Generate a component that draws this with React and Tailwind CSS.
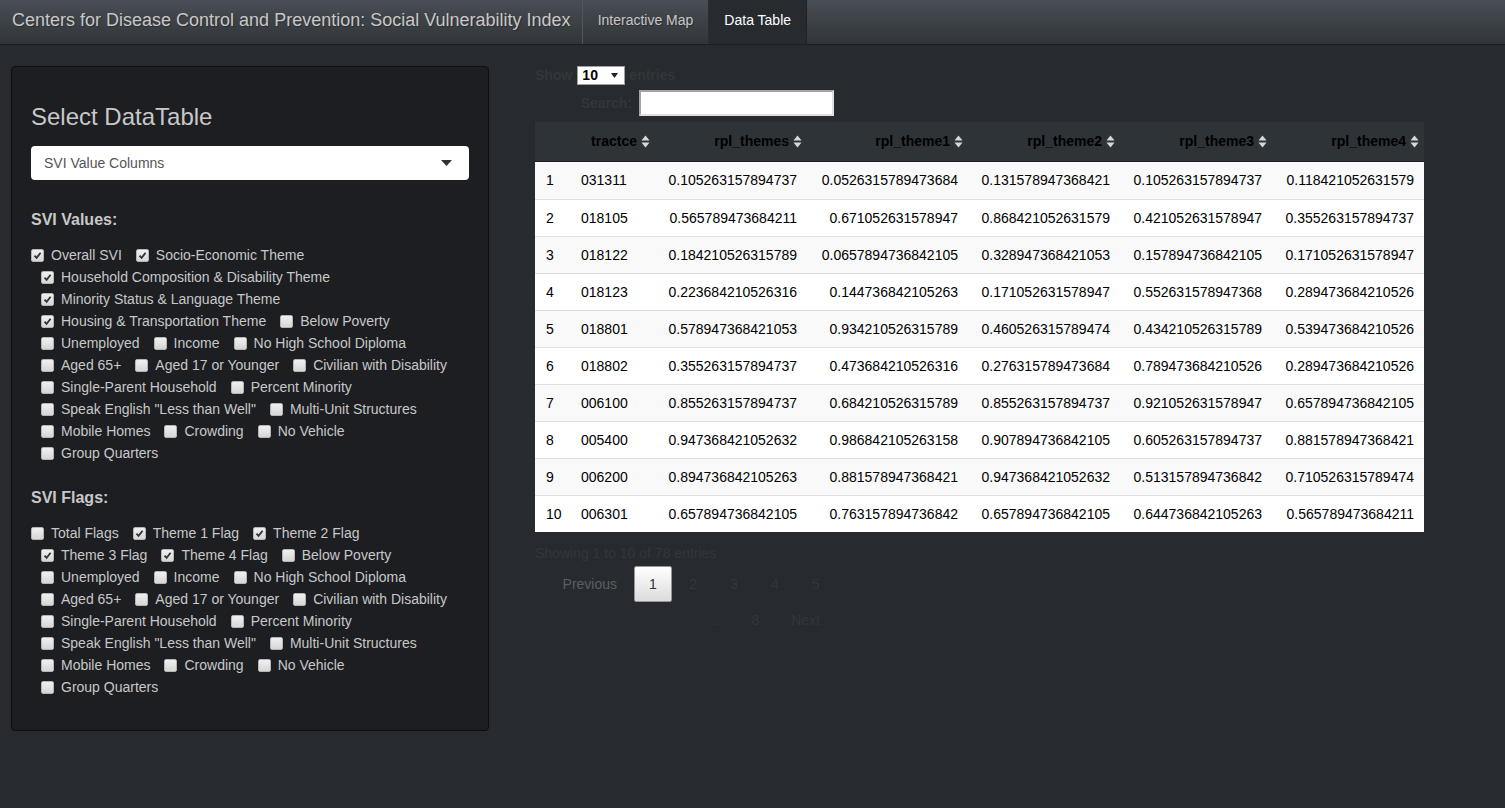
import React from "react";

const SVI_VALUES = [
  ["Overall SVI", true],
  ["Socio-Economic Theme", true],
  ["Household Composition & Disability Theme", true],
  ["Minority Status & Language Theme", true],
  ["Housing & Transportation Theme", true],
  ["Below Poverty", false],
  ["Unemployed", false],
  ["Income", false],
  ["No High School Diploma", false],
  ["Aged 65+", false],
  ["Aged 17 or Younger", false],
  ["Civilian with Disability", false],
  ["Single-Parent Household", false],
  ["Percent Minority", false],
  ['Speak English "Less than Well"', false],
  ["Multi-Unit Structures", false],
  ["Mobile Homes", false],
  ["Crowding", false],
  ["No Vehicle", false],
  ["Group Quarters", false],
];

const SVI_FLAGS = [
  ["Total Flags", false],
  ["Theme 1 Flag", true],
  ["Theme 2 Flag", true],
  ["Theme 3 Flag", true],
  ["Theme 4 Flag", true],
  ...SVI_VALUES.slice(5),
];

const ROWS = [
  ["031311", "0.105263157894737", "0.0526315789473684", "0.131578947368421", "0.105263157894737", "0.118421052631579"],
  ["018105", "0.565789473684211", "0.671052631578947", "0.868421052631579", "0.421052631578947", "0.355263157894737"],
  ["018122", "0.184210526315789", "0.0657894736842105", "0.328947368421053", "0.157894736842105", "0.171052631578947"],
  ["018123", "0.223684210526316", "0.144736842105263", "0.171052631578947", "0.552631578947368", "0.289473684210526"],
  ["018801", "0.578947368421053", "0.934210526315789", "0.460526315789474", "0.434210526315789", "0.539473684210526"],
  ["018802", "0.355263157894737", "0.473684210526316", "0.276315789473684", "0.789473684210526", "0.289473684210526"],
  ["006100", "0.855263157894737", "0.684210526315789", "0.855263157894737", "0.921052631578947", "0.657894736842105"],
  ["005400", "0.947368421052632", "0.986842105263158", "0.907894736842105", "0.605263157894737", "0.881578947368421"],
  ["006200", "0.894736842105263", "0.881578947368421", "0.947368421052632", "0.513157894736842", "0.710526315789474"],
  ["006301", "0.657894736842105", "0.763157894736842", "0.657894736842105", "0.644736842105263", "0.565789473684211"],
];

const COLUMNS = ["rpl_themes", "rpl_theme1", "rpl_theme2", "rpl_theme3", "rpl_theme4"];

// small grey checkbox like the default browser one
const Box = ({ checked }) => (
  <span className="flex h-[13px] w-[13px] shrink-0 items-center justify-center rounded-[2px] border border-[#b5b5b5] bg-[linear-gradient(#f0f0f0,#d6d6d6)]">
    {checked && (
      <svg width="9" height="9" viewBox="0 0 9 9">
        <path d="M1.5 4.6 L3.6 6.8 L7.6 1.8" fill="none" stroke="#333" strokeWidth="1.8" />
      </svg>
    )}
  </span>
);

const CheckGroup = ({ items }) => (
  <div className="flex flex-wrap gap-x-[4px]">
    {items.map(([label, checked], i) => (
      <label
        key={label}
        className={`flex h-[22px] items-center whitespace-nowrap ${i === 0 ? "" : "ml-[10px]"}`}
      >
        <Box checked={checked} />
        <span className="ml-[7px] text-[14px] text-[#c8c8c8]">{label}</span>
      </label>
    ))}
  </div>
);

const SortIcon = () => (
  <svg width="9" height="15" viewBox="0 0 9 15" className="shrink-0">
    <path d="M0.5 6.5 L4.5 1.5 L8.5 6.5 Z" fill="#d8d8d8" />
    <path d="M0.5 8.5 L4.5 13.5 L8.5 8.5 Z" fill="#d8d8d8" />
  </svg>
);

const PageButton = ({ children, className = "px-[14px]" }) => (
  <span className={`ml-[2px] inline-block h-[36px] border border-transparent leading-[34px] ${className}`}>
    {children}
  </span>
);

export default function App() {
  return (
    <div className="min-h-screen bg-[#272b30] font-['Liberation_Sans',Arial,sans-serif] text-[14px] text-[#c8c8c8]">
      {/* Navbar */}
      <div className="flex h-[45px] border-b border-[#1c1e22] bg-[linear-gradient(#484e55,#3a3f44_60%,#313539)]">
        <div className="flex items-center pb-[4px] pl-[12px] pr-[11px] text-[18px] text-[#c8c8c8] [text-shadow:1px_1px_1px_rgba(0,0,0,0.3)]">
          Centers for Disease Control and Prevention: Social Vulnerability Index
        </div>
        <div className="flex items-center border-l border-[#52575d] border-r border-r-[#2c3034] px-[15px] pb-[4px] text-[#c8c8c8] [text-shadow:1px_1px_1px_rgba(0,0,0,0.3)]">
          Interactive Map
        </div>
        <div className="flex items-center border-r border-[#1f2226] bg-[#272b30] px-[15px] pb-[4px] text-white">
          Data Table
        </div>
      </div>

      <div className="flex items-start">
        {/* Sidebar */}
        <div className="ml-[11px] mt-[21px] w-[478px] rounded-[4px] border border-[#0c0d0e] bg-[#1c1e22] px-[19px] pb-[32px] pt-[19px]">
          <h3 className="mt-[18px] text-[24px] leading-[26px] text-[#c8c8c8]">Select DataTable</h3>
          <div className="mt-[16px] flex h-[34px] items-center justify-between rounded-[4px] bg-white pl-[13px] pr-[17px] text-[14px] text-[#555]">
            <span>SVI Value Columns</span>
            <svg width="11" height="6" viewBox="0 0 11 6">
              <path d="M0 0 L11 0 L5.5 6 Z" fill="#333" />
            </svg>
          </div>

          <div className="mt-[29px] text-[16px] font-bold leading-[22px] text-[#c8c8c8]">SVI Values:</div>
          <div className="mt-[13px]">
            <CheckGroup items={SVI_VALUES} />
          </div>

          <div className="mt-[23px] text-[16px] font-bold leading-[22px] text-[#c8c8c8]">SVI Flags:</div>
          <div className="mt-[13px]">
            <CheckGroup items={SVI_FLAGS} />
          </div>
        </div>

        {/* Main panel */}
        <div className="ml-[46px] mt-[21px] w-[889px]">
          <div className="flex h-[19px] items-center text-[14px] font-bold text-[#33363a]">
            <span>Show</span>
            <span className="ml-[5px] flex h-[19px] w-[48px] items-center justify-between border border-[#a0a0a0] bg-white pl-[4px] pr-[6px] text-black">
              10
              <svg width="7" height="5" viewBox="0 0 7 5">
                <path d="M0 0 L7 0 L3.5 5 Z" fill="#222" />
              </svg>
            </span>
            <span className="ml-[4px]">entries</span>
          </div>
          <div className="mt-[5px] flex w-[299px] items-center justify-end">
            <span className="text-[14px] font-bold text-[#33363a]">Search:</span>
            <span className="ml-[7px] h-[26px] w-[195px] border-2 border-[#a3a3a3] border-b-[#e0e0e0] border-r-[#e0e0e0] bg-white" />
          </div>

          <table className="mt-[6px] w-[889px] table-fixed border-separate border-spacing-0 text-[14px]">
            <colgroup>
              <col className="w-[36px]" />
              <col className="w-[84px]" />
              <col className="w-[152px]" />
              <col className="w-[161px]" />
              <col className="w-[152px]" />
              <col className="w-[152px]" />
              <col className="w-[152px]" />
            </colgroup>
            <thead>
              <tr>
                <th className="h-[40px] border-b border-[#1a1c1f] bg-[#2e3338]" />
                {["tractce", ...COLUMNS].map((col) => (
                  <th key={col} className="h-[40px] border-b border-[#1a1c1f] bg-[#2e3338] pr-[5px] font-bold text-black">
                    <span className="flex items-center justify-end gap-[4px]">
                      {col}
                      <SortIcon />
                    </span>
                  </th>
                ))}
              </tr>
            </thead>
            <tbody>
              {ROWS.map((row, i) => (
                <tr key={row[0]} className={i % 2 === 0 ? "bg-[#f9f9f9]" : "bg-white"}>
                  <td className={`h-[37px] pl-[11px] text-black ${i === 0 ? "" : "border-t border-[#dddddd]"}`}>{i + 1}</td>
                  <td className={`h-[37px] pl-[10px] text-black ${i === 0 ? "" : "border-t border-[#dddddd]"}`}>{row[0]}</td>
                  {row.slice(1).map((v, j) => (
                    <td
                      key={j}
                      className={`h-[37px] pr-[10px] text-right text-black ${i === 0 ? "" : "border-t border-[#dddddd]"}`}
                    >
                      {v}
                    </td>
                  ))}
                </tr>
              ))}
            </tbody>
          </table>

          <div className="mt-[11px] leading-[20px] text-[#33373b]">Showing 1 to 10 of 78 entries</div>

          <div className="mt-[3px] flex w-[300px] flex-wrap justify-end text-[14px] text-[#33373b]">
            <PageButton className="px-[14px] text-[#5a5e63]">Previous</PageButton>
            <PageButton className="rounded-[2px] !border-[#979797] px-[14px] bg-[linear-gradient(#ffffff,#dcdcdc)] text-[#333]">1</PageButton>
            <PageButton className="px-[14.5px]">2</PageButton>
            <PageButton className="px-[14.5px]">3</PageButton>
            <PageButton className="px-[14.5px]">4</PageButton>
            <PageButton className="px-[14.5px]">5</PageButton>
            <span className="ml-[2px] inline-block h-[36px] px-[14px] leading-[36px]">…</span>
            <PageButton>8</PageButton>
            <PageButton>Next</PageButton>
          </div>
        </div>
      </div>
    </div>
  );
}
